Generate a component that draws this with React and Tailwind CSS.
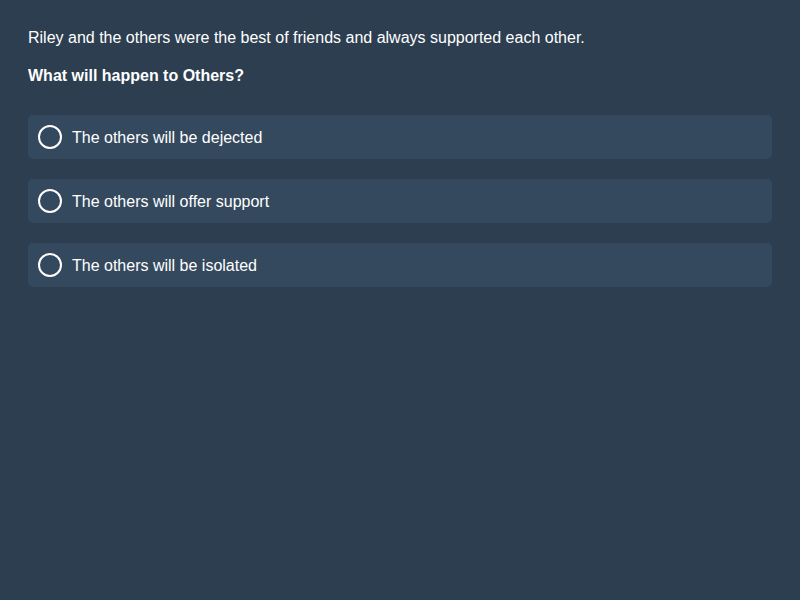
import React from "react";

const options = [
  "The others will be dejected",
  "The others will offer support",
  "The others will be isolated",
];

const App = () => {
  return (
    <div
      className="min-h-screen bg-[#2c3e50] px-[28px] pt-[28px] text-white"
      style={{ fontFamily: '"Liberation Sans", Arial, sans-serif' }}
    >
      <p className="text-[16px] leading-[20px]">
        Riley and the others were the best of friends and always supported each other.
      </p>
      <p className="mt-[18px] text-[16px] leading-[20px] font-bold">What will happen to Others?</p>
      <div className="mt-[29px] flex flex-col gap-[20px]">
        {options.map((o) => (
          <label
            key={o}
            className="flex h-[44px] cursor-pointer items-center gap-[10px] rounded-[5px] bg-[#34495e] px-[10px]"
          >
            <span className="h-[24px] w-[24px] rounded-full border-2 border-white" />
            <span className="pt-[2px] text-[16px] leading-[20px]">{o}</span>
          </label>
        ))}
      </div>
    </div>
  );
};

export default App;
